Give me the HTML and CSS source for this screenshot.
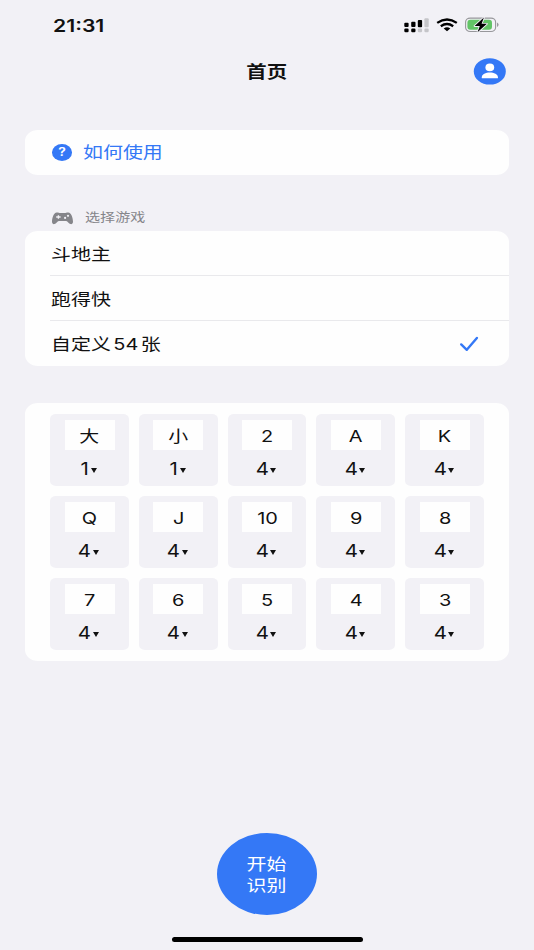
FILE: index.html
```html
<!DOCTYPE html>
<html lang="zh-CN">
<head>
<meta charset="utf-8">
<title>首页</title>
<link rel="stylesheet" href="styles.css">
</head>
<body>
<div class="screen">
  <header class="status">
    <span class="wide time">21:31</span>
    <div class="status-icons">
      <svg class="signal" width="26" height="15" viewBox="0 0 26 15">
        <g fill="#000"><rect x="0.3" y="4.8" width="4.3" height="4.2" rx="1"/><rect x="7.2" y="3.8" width="4.3" height="5.2" rx="1"/><rect x="13.8" y="2" width="4.3" height="7.2" rx="1"/><rect x="0.3" y="10.6" width="4.3" height="3.6" rx="1.2"/><rect x="7.2" y="10.6" width="4.3" height="3.6" rx="1.2"/></g>
        <g fill="#c5c5c9"><rect x="20.4" y="0.2" width="4.3" height="9" rx="1"/><rect x="13.8" y="10.6" width="4.3" height="3.6" rx="1.2"/><rect x="20.4" y="10.6" width="4.3" height="3.6" rx="1.2"/></g>
      </svg>
      <svg class="wifi" width="22" height="14" viewBox="0 0 22 14">
        <g fill="none" stroke="#000" stroke-width="2.3"><path d="M1.2 4.9Q11 -1.9 20.8 4.9"/><path d="M4.8 8.2Q11 3.8 17.2 8.2"/></g>
        <path d="M7.7 10.5Q11 8.2 14.3 10.5L11 13.2Z"/>
      </svg>
      <svg class="battery" width="34" height="16" viewBox="0 0 34 16">
        <rect x="0.6" y="1.1" width="30" height="13.4" rx="4.6" ry="4" fill="none" stroke="#97979b" stroke-width="1.1"/>
        <rect x="2.4" y="2.8" width="24.6" height="10" rx="3" fill="#62c466"/>
        <path d="M32 5.6Q33.6 6.3 33.6 7.8T32 10Z" fill="#97979b"/>
        <path d="M18.9 0.6L9.6 9H14.8L12.5 15.3L21.9 6.8H16.6Z" fill="#000" stroke="#f2f1f6" stroke-width="1.8" stroke-linejoin="round" paint-order="stroke"/>
      </svg>
    </div>
  </header>

  <nav class="navbar">
    <h1 class="wide title">首页</h1>
    <svg class="avatar" width="33" height="27" viewBox="0 0 33 27">
      <ellipse cx="16.8" cy="13.4" rx="16" ry="13.2" fill="#3478f6"/>
      <ellipse cx="16.8" cy="9.4" rx="4.4" ry="3.8" fill="#fff"/>
      <path d="M8.7 19.7C8.7 12.9 25 12.9 25 19.7Q25 20.2 24.4 20.2H9.3Q8.7 20.2 8.7 19.7Z" fill="#fff"/>
    </svg>
  </nav>

  <a class="card help">
    <span class="badge"><span class="wide">?</span></span>
    <span class="wide">如何使用</span>
  </a>

  <div class="section-head">
    <svg width="23" height="13" viewBox="0 0 23 13">
      <path d="M5.7 0.4C7.8 0.4 8.1 1.1 9.3 1.1H13.7C14.9 1.1 15.2 0.4 17.3 0.4C20.3 0.4 22 5.9 22 9.7C22 11.6 20.8 12.4 19.5 12.1C17.7 11.7 16.7 8.9 15.2 8.9H7.8C6.3 8.9 5.3 11.7 3.5 12.1C2.2 12.4 1 11.6 1 9.7C1 5.9 2.7 0.4 5.7 0.4Z" fill="#85858a"/>
      <path d="M5.2 5H9.6M7.4 3.2V6.8" stroke="#f2f1f6" stroke-width="1.3"/>
      <circle cx="14.1" cy="5.9" r="1.1" fill="#f2f1f6"/><circle cx="17" cy="3.8" r="1.1" fill="#f2f1f6"/>
    </svg>
    <span class="wide">选择游戏</span>
  </div>

  <ul class="card games">
    <li><span class="wide">斗地主</span></li>
    <li><span class="wide">跑得快</span></li>
    <li><span class="wide">自定义<span class="num">54</span>张</span>
      <svg width="20" height="16" viewBox="0 0 20 16"><path d="M2.2 8.4L7.8 13.8L17.9 2" fill="none" stroke="#3478f6" stroke-width="2.4" stroke-linecap="round" stroke-linejoin="round"/></svg>
    </li>
  </ul>

  <section class="card deck">
    <div class="tile"><div class="face"><span class="wide">大</span></div><div class="count"><span class="wide">1</span><i></i></div></div>
    <div class="tile"><div class="face"><span class="wide">小</span></div><div class="count"><span class="wide">1</span><i></i></div></div>
    <div class="tile"><div class="face"><span class="wide">2</span></div><div class="count"><span class="wide">4</span><i></i></div></div>
    <div class="tile"><div class="face"><span class="wide">A</span></div><div class="count"><span class="wide">4</span><i></i></div></div>
    <div class="tile"><div class="face"><span class="wide">K</span></div><div class="count"><span class="wide">4</span><i></i></div></div>
    <div class="tile"><div class="face"><span class="wide">Q</span></div><div class="count"><span class="wide">4</span><i></i></div></div>
    <div class="tile"><div class="face"><span class="wide">J</span></div><div class="count"><span class="wide">4</span><i></i></div></div>
    <div class="tile"><div class="face"><span class="wide">10</span></div><div class="count"><span class="wide">4</span><i></i></div></div>
    <div class="tile"><div class="face"><span class="wide">9</span></div><div class="count"><span class="wide">4</span><i></i></div></div>
    <div class="tile"><div class="face"><span class="wide">8</span></div><div class="count"><span class="wide">4</span><i></i></div></div>
    <div class="tile"><div class="face"><span class="wide">7</span></div><div class="count"><span class="wide">4</span><i></i></div></div>
    <div class="tile"><div class="face"><span class="wide">6</span></div><div class="count"><span class="wide">4</span><i></i></div></div>
    <div class="tile"><div class="face"><span class="wide">5</span></div><div class="count"><span class="wide">4</span><i></i></div></div>
    <div class="tile"><div class="face"><span class="wide">4</span></div><div class="count"><span class="wide">4</span><i></i></div></div>
    <div class="tile"><div class="face"><span class="wide">3</span></div><div class="count"><span class="wide">4</span><i></i></div></div>
  </section>

  <button class="start"><span class="wide">开始<br>识别</span></button>
  <div class="home-bar"></div>
</div>
</body>
</html>
```
FILE: styles.css
```css
* { box-sizing: border-box; }

body {
  margin: 0;
  background: #f2f1f6;
  color: #111;
  font-family: Inter, "Noto Sans CJK SC", sans-serif;
  font-size: 16.4px;
}

.screen {
  width: 534px;
  height: 950px;
  display: flex;
  flex-direction: column;
  padding: 0 25px;
  overflow: hidden;
}

/* Horizontally expanded lettering */
.wide {
  display: inline-block;
  line-height: 20px;
  white-space: nowrap;
  transform: scaleX(1.217);
  transform-origin: left center;
}

.status {
  height: 50px;
  display: flex;
  align-items: center;
  justify-content: space-between;
  padding: 0 10px 0 27.5px;
}
.time {
  padding-top: 1px;
  font-size: 17.4px;
  font-weight: 600;
}
.status-icons { display: flex; align-items: center; }
.wifi { margin-left: 6px; }
.battery { margin-left: 7px; }

.navbar {
  height: 43px;
  display: grid;
  grid-template-columns: 1fr auto 1fr;
  align-items: center;
  padding-right: 3px;
}
.title {
  grid-column: 2;
  margin: 0 0 0 2px;
  font-size: 16.8px;
  font-weight: 600;
  transform-origin: center;
}
.avatar { justify-self: end; }

.card {
  background: #fefefe;
  border-radius: 13px / 11px;
}

.help {
  height: 45px;
  margin-top: 36.5px;
  display: flex;
  align-items: center;
  padding-left: 26.5px;
  gap: 11px;
  color: #3478f6;
}
.badge {
  width: 20.5px;
  height: 17px;
  border-radius: 50%;
  background: #3478f6;
  color: #fff;
  display: flex;
  align-items: center;
  justify-content: center;
  font-size: 11.5px;
  font-weight: 600;
}
.badge .wide { transform-origin: center; }

.section-head {
  height: 26px;
  margin-top: 30.5px;
  display: flex;
  align-items: center;
  padding-left: 26px;
  gap: 11px;
  font-size: 12.4px;
  color: #85858a;
}

.games {
  height: 135px;
  margin: 0;
  padding: 0 0 0 25px;
  list-style: none;
}
.games li {
  height: 45px;
  display: flex;
  align-items: center;
  justify-content: space-between;
  padding: 2px 30px 0 0.5px;
  border-bottom: 1.4px solid #e9e9ec;
}
.games li:last-child {
  padding-top: 1px;
  border-bottom: 0;
}
.num { margin: 0 2px; }

.deck {
  margin-top: 37px;
  height: 257.5px;
  padding: 11px 25px;
  display: grid;
  grid-template-columns: repeat(5, 1fr);
  grid-auto-rows: 71.5px;
  gap: 10.5px 10px;
}
.tile {
  background: #f2f1f6;
  border-radius: 6px / 5px;
  display: flex;
  flex-direction: column;
  align-items: center;
  padding: 6px 0 0 0.5px;
}
.face {
  width: 50px;
  height: 31px;
  background: #fefefe;
  display: flex;
  align-items: center;
  justify-content: center;
}
.face .wide {
  padding-top: 1px;
  transform-origin: center;
}
.count {
  height: 36px;
  display: flex;
  align-items: center;
  padding-top: 3px;
}
.count .wide {
  font-size: 16.8px;
  transform-origin: right center;
}
.count i {
  margin: 2px 0 0 1.5px;
  border: 3px solid transparent;
  border-top: 5px solid #111;
  border-bottom: 0;
}

.start {
  width: 100px;
  height: 82px;
  margin: 172.5px auto 0;
  padding: 2px 1px 0 0;
  border: 0;
  border-radius: 50%;
  background: #3478f6;
  color: #fff;
  font: inherit;
}
.start .wide {
  line-height: 21.5px;
  transform-origin: center;
}

.home-bar {
  width: 191px;
  height: 5px;
  margin: 21.5px auto 0;
  border-radius: 3px;
  background: #000;
}
```
